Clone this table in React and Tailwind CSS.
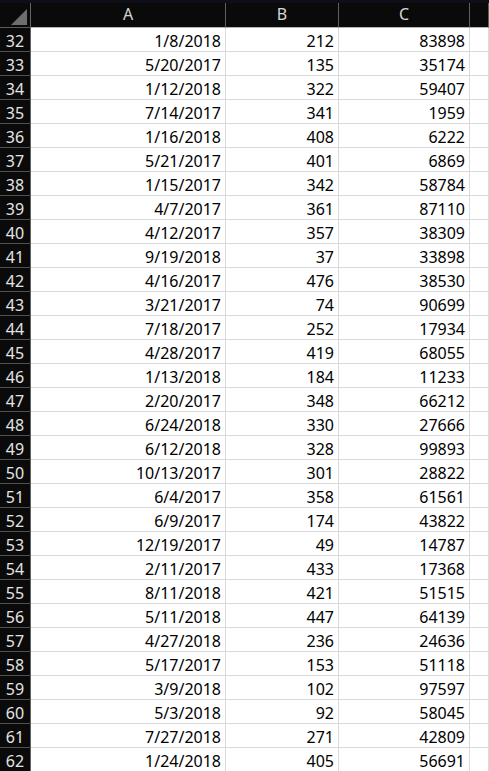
const rows = [
  [32, "1/8/2018", 212, 83898],
  [33, "5/20/2017", 135, 35174],
  [34, "1/12/2018", 322, 59407],
  [35, "7/14/2017", 341, 1959],
  [36, "1/16/2018", 408, 6222],
  [37, "5/21/2017", 401, 6869],
  [38, "1/15/2017", 342, 58784],
  [39, "4/7/2017", 361, 87110],
  [40, "4/12/2017", 357, 38309],
  [41, "9/19/2018", 37, 33898],
  [42, "4/16/2017", 476, 38530],
  [43, "3/21/2017", 74, 90699],
  [44, "7/18/2017", 252, 17934],
  [45, "4/28/2017", 419, 68055],
  [46, "1/13/2018", 184, 11233],
  [47, "2/20/2017", 348, 66212],
  [48, "6/24/2018", 330, 27666],
  [49, "6/12/2018", 328, 99893],
  [50, "10/13/2017", 301, 28822],
  [51, "6/4/2017", 358, 61561],
  [52, "6/9/2017", 174, 43822],
  [53, "12/19/2017", 49, 14787],
  [54, "2/11/2017", 433, 17368],
  [55, "8/11/2018", 421, 51515],
  [56, "5/11/2018", 447, 64139],
  [57, "4/27/2018", 236, 24636],
  [58, "5/17/2017", 153, 51118],
  [59, "3/9/2018", 102, 97597],
  [60, "5/3/2018", 92, 58045],
  [61, "7/27/2018", 271, 42809],
  [62, "1/24/2018", 405, 56691],
];

const cell =
  "h-[24px] border-r border-b border-[#dadada] bg-white text-black text-right pr-[4px] pt-[4px] leading-[18px] overflow-hidden whitespace-nowrap";

export default function App() {
  return (
    <div
      className="w-full h-[771px] overflow-hidden bg-white text-[16px]"
      style={{ fontFamily: '"Noto Sans", "Liberation Sans", sans-serif' }}
    >
      {/* header */}
      <div className="bg-[#0e0d18] pt-[3px]">
        <div className="grid grid-cols-[31px_195px_113px_131px_1fr] h-[25px] bg-[#0a0a0a]">
          <div className="border-r border-b border-r-[#636363] border-b-[#5a5a5a] flex items-end justify-end pr-[3px] pb-[2px]">
            <svg width="16" height="16" viewBox="0 0 16 16">
              <polygon points="16,0 16,16 0,16" fill="#6e6e6e" />
            </svg>
          </div>
          {["A", "B", "C", ""].map((h, i) => (
            <div
              key={i}
              className="border-r border-b border-r-[#5f5f5f] border-b-[#b4b4b4] text-center text-[#d6d6d6] leading-[22px]"
            >
              {h}
            </div>
          ))}
        </div>
      </div>
      {/* body */}
      <div className="grid grid-cols-[31px_195px_113px_131px_1fr]">
        {rows.map(([n, a, b, c]) => (
          <div key={n} className="contents">
            <div className="h-[24px] bg-[#0a0a0a] border-r border-b border-r-[#636363] border-b-[#4f4f4f] text-center text-[#e4e4e4] pt-[4px] leading-[18px]">
              {n}
            </div>
            <div className={cell}>{a}</div>
            <div className={cell}>{b}</div>
            <div className={cell}>{c}</div>
            <div className={cell}></div>
          </div>
        ))}
      </div>
    </div>
  );
}
